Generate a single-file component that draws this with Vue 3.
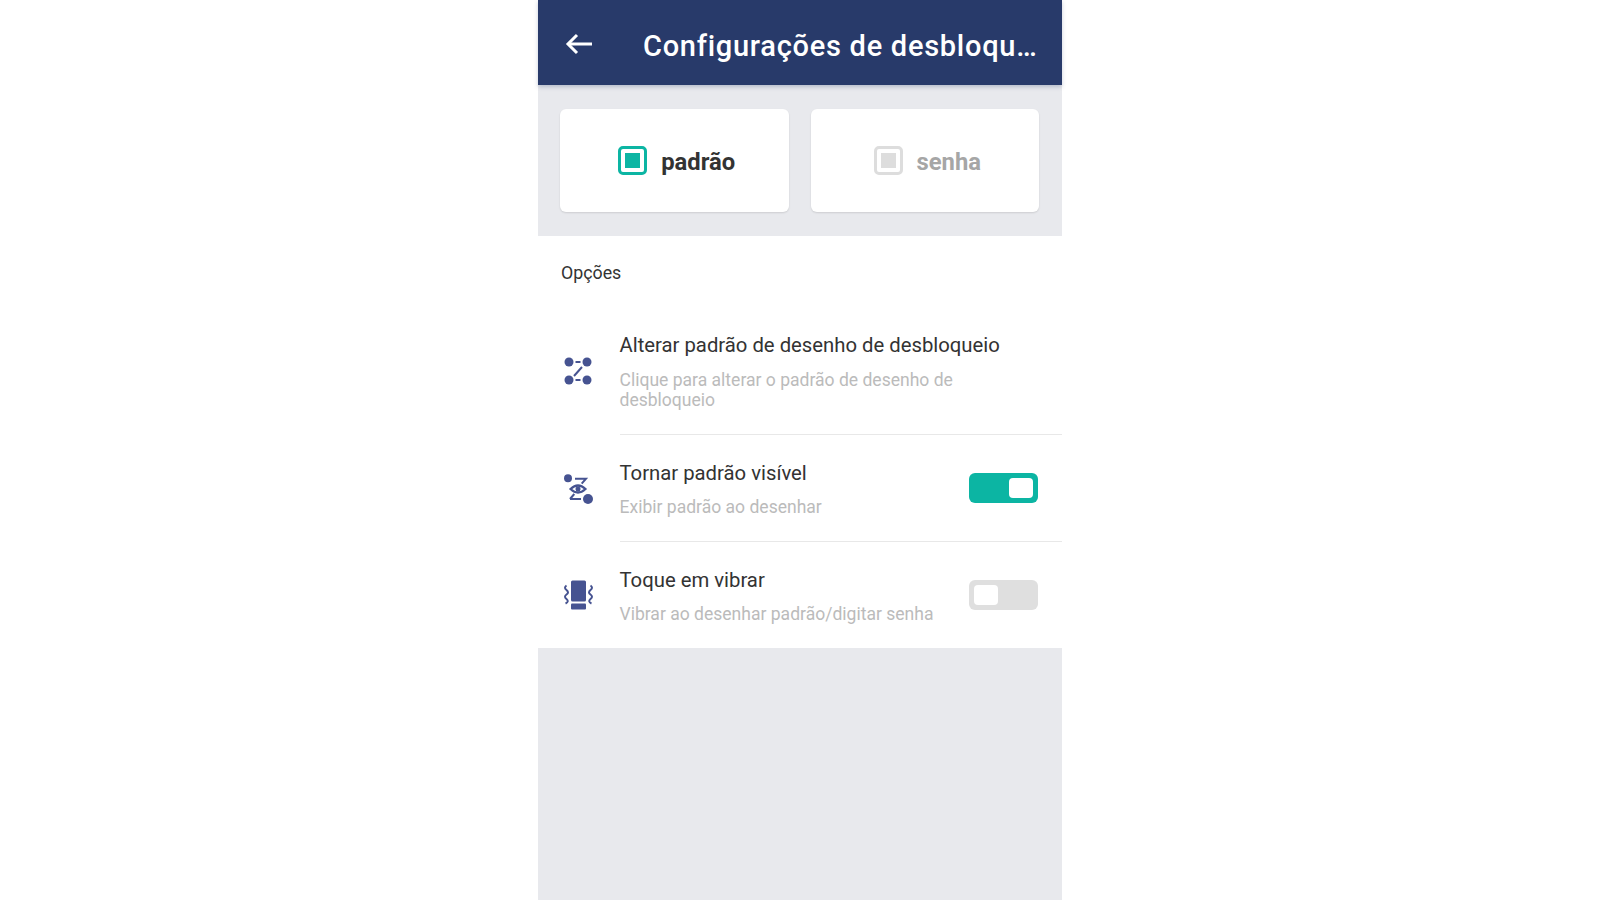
<script setup>
const rows = [
  { id: 'a', title: 'Alterar padrão de desenho de desbloqueio', sub: 'Clique para alterar o padrão de desenho de desbloqueio' },
  { id: 'b', title: 'Tornar padrão visível', sub: 'Exibir padrão ao desenhar', toggle: 'on' },
  { id: 'c', title: 'Toque em vibrar', sub: 'Vibrar ao desenhar padrão/digitar senha', toggle: 'off' },
]
</script>

<template>
  <div class="page">
    <div class="phone">
      <header class="bar">
        <svg class="back" width="30" height="24" viewBox="0 0 30 24" fill="none" stroke="#fff" stroke-width="3">
          <path d="M28 12H4" />
          <path d="M13 3l-9 9 9 9" />
        </svg>
        <h1 class="title">Configurações de desbloqu…</h1>
      </header>
      <section class="modes">
        <div class="card">
          <span class="check active"><i></i></span>
          <span class="label">padrão</span>
        </div>
        <div class="card">
          <span class="check"><i></i></span>
          <span class="label muted">senha</span>
        </div>
      </section>
      <section class="options">
        <div class="heading">Opções</div>
        <div v-for="r in rows" :key="r.id" class="row">
          <div class="icon">
            <svg v-if="r.id === 'a'" width="36" height="36" viewBox="0 0 36 36" fill="#465391" stroke="#465391">
              <circle cx="9" cy="9" r="4.500" stroke="none" />
              <circle cx="27" cy="9" r="4.500" stroke="none" />
              <circle cx="9" cy="27" r="4.500" stroke="none" />
              <circle cx="27" cy="27" r="4.500" stroke="none" />
              <path d="M15.500 9h5M15.500 27h5M14 23l8-9" stroke-width="2" fill="none" />
            </svg>
            <svg v-else-if="r.id === 'b'" width="36" height="36" viewBox="0 0 36 36" fill="#465391" stroke="#465391">
              <circle cx="8" cy="7.300" r="4" stroke="none" />
              <circle cx="28" cy="28" r="5" stroke="none" />
              <path d="M15 7.700h11l-4.300 5M10 28h11M14.300 23l-4.300 5" stroke-width="2" fill="none" />
              <path d="M10.500 18q7.500-7 15 0q-7.500 7-15 0z" fill="none" stroke-width="2.200" />
              <circle cx="18" cy="18" r="2.500" stroke="none" />
            </svg>
            <svg v-else width="36" height="36" viewBox="0 0 36 36" fill="#465391" stroke="none">
              <rect x="11" y="3.500" width="15" height="21" rx="1.500" />
              <rect x="11" y="26.500" width="15" height="6" rx="1" />
              <path d="M6.500 8.500q-3 2 0 4.500t0 4.500q-3 2 0 4.500t-1 4.500M30.500 8.500q3 2 0 4.500t0 4.500q3 2 0 4.500t1 4.500" fill="none" stroke="#465391" stroke-width="2" />
            </svg>
          </div>
          <div class="body">
            <div class="text">
              <div class="name">{{ r.title }}</div>
              <div class="sub">{{ r.sub }}</div>
            </div>
            <div v-if="r.toggle" class="toggle" :class="r.toggle"><i></i></div>
          </div>
        </div>
      </section>
    </div>
  </div>
</template>

<style>
html, body { background: #fff; }
</style>

<style scoped>
.page {
  display: flex;
  justify-content: center;
  height: 900px;
  overflow: hidden;
  font-family: Roboto, "Liberation Sans", sans-serif;
}
.phone {
  width: 524px;
  height: 900px;
  background: #e8e9ed;
}
.bar {
  display: flex;
  align-items: center;
  height: 85px;
  background: #283a6a;
  box-shadow: 0 2px 4px rgba(40, 58, 106, 0.25);
  padding: 7px 24px 0 26px;
  box-sizing: border-box;
}
.back { flex: none; margin: -5px 0 0; }
.title {
  margin: 0 0 0 49px;
  color: #fff;
  font-size: 29px;
  font-weight: 500;
  letter-spacing: 0.730px;
  white-space: nowrap;
}
.modes {
  display: flex;
  gap: 22px;
  padding: 24px 23px 24px 22px;
}
.card {
  flex: 1;
  height: 103px;
  background: #fff;
  border-radius: 6px;
  box-shadow: 0 1px 2px rgba(0, 0, 0, 0.12);
  display: flex;
  align-items: center;
  justify-content: center;
  gap: 14px;
  padding-left: 5px;
}
.check {
  width: 29px;
  height: 29px;
  box-sizing: border-box;
  border: 3px solid #ddd;
  border-radius: 5px;
  display: flex;
  align-items: center;
  justify-content: center;
}
.check i {
  display: block;
  width: 15px;
  height: 15px;
  background: #ddd;
}
.check.active { border-color: #0cb5a3; }
.check.active i { background: #0cb5a3; }
.label {
  font-size: 23.800px;
  font-weight: 700;
  color: #333;
  padding-top: 2px;
}
.label.muted { color: #a6a6a6; }
.options { background: #fff; }
.heading {
  height: 71px;
  box-sizing: border-box;
  padding: 26px 0 0 23px;
  font-size: 17.800px;
  line-height: 22px;
  color: #333;
}
.row {
  display: flex;
  align-items: center;
  padding-left: 22px;
}
.icon {
  flex: none;
  width: 36px;
  height: 36px;
  margin-right: 23.500px;
}
.icon svg { display: block; }
.body {
  flex: 1;
  min-width: 0;
  display: flex;
  align-items: center;
  padding: 26px 24px 24px 0;
  border-bottom: 1px solid #e8e8e8;
}
.row:last-child .body { border-bottom: 0; }
.text { flex: 1; min-width: 0; }
.name {
  font-size: 20.300px;
  line-height: 24px;
  color: #333;
}
.sub {
  margin-top: 12px;
  font-size: 17.550px;
  line-height: 20px;
  color: #bbb;
  max-width: 360px;
}
.heading + .row .sub { margin-top: 13px; }
.toggle {
  flex: none;
  width: 69px;
  height: 30px;
  box-sizing: border-box;
  border-radius: 6px;
  padding: 5px;
  margin-bottom: 3px;
  display: flex;
}
.toggle i {
  display: block;
  width: 24px;
  height: 20px;
  background: #fff;
  border-radius: 4px;
}
.toggle.on { background: #0cb5a3; justify-content: flex-end; }
.toggle.off { background: #dfdfdf; }
</style>
